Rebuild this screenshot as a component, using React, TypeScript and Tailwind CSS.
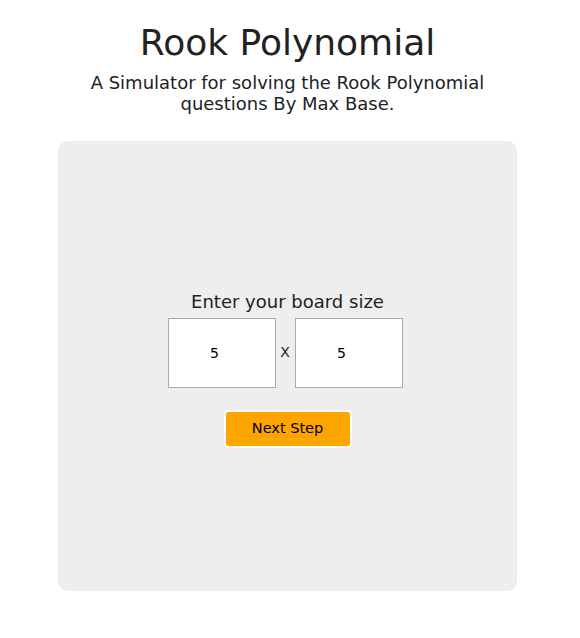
import React, { useState } from "react";

const App = () => {
  const [rows, setRows] = useState("5");
  const [cols, setCols] = useState("5");

  return (
    <div
      className="w-[575px] min-h-[638px] bg-white text-[#222] pt-[22px]"
      style={{ fontFamily: '"DejaVu Sans", sans-serif' }}
    >
      {/* Header */}
      <div className="text-center">
        <h1 className="text-[36px] leading-[42px]">Rook Polynomial</h1>
        <p className="mt-[8px] mx-auto w-[420px] text-[18px] leading-[21px]">
          A Simulator for solving the Rook Polynomial questions By Max Base.
        </p>
      </div>

      {/* Board size panel */}
      <div className="mx-auto mt-[27px] w-[459px] h-[450px] rounded-[10px] bg-[#eeeeee] flex flex-col items-center justify-center">
        <div className="text-[18px] leading-[21px] mt-[6px]">Enter your board size</div>
        <div className="flex items-center mt-[6px] mr-[4px]">
          <input
            type="number"
            value={rows}
            onChange={(e) => setRows(e.target.value)}
            className="w-[108px] h-[70px] bg-white border border-[#aaaaaa] text-center text-[14px] text-black outline-none"
          />
          <span className="w-[10px] ml-[4px] mr-[5px] text-center text-[14px]">X</span>
          <input
            type="number"
            value={cols}
            onChange={(e) => setCols(e.target.value)}
            className="w-[108px] h-[70px] bg-white border border-[#aaaaaa] text-center text-[14px] text-black outline-none"
          />
        </div>
        <button className="mt-[22px] w-[128px] h-[38px] bg-[#ffa500] border-2 border-white rounded-[4px] text-[14.5px] text-black">
          Next Step
        </button>
      </div>
    </div>
  );
};

export default App;
